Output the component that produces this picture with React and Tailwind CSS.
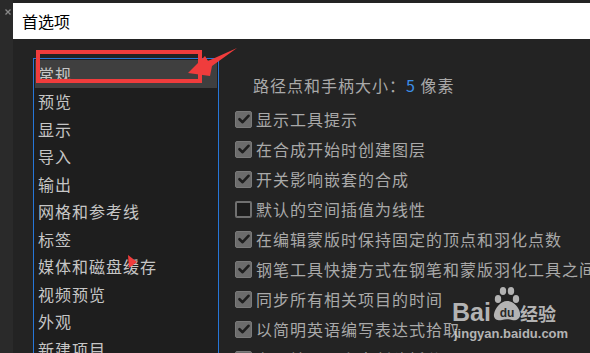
import React from "react";

const leftItems = ["常规","预览","显示","导入","输出","网格和参考线","标签","媒体和磁盘缓存","视频预览","外观","新建项目","自动保存"];
const rows = [
  ["显示工具提示", true],
  ["在合成开始时创建图层", true],
  ["开关影响嵌套的合成", true],
  ["默认的空间插值为线性", false],
  ["在编辑蒙版时保持固定的顶点和羽化点数", true],
  ["钢笔工具快捷方式在钢笔和蒙版羽化工具之间切换", true],
  ["同步所有相关项目的时间", true],
  ["以简明英语编写表达式拾取", true],
  ["在原始图层上方创建拆分图层", true],
];

function Box({ checked }) {
  if (!checked)
    return <div className="w-[17px] h-[17px] shrink-0 rounded-[2px] border-2 border-[#707070] bg-[#1c1c1c]" />;
  return (
    <div className="w-[17px] h-[17px] shrink-0 rounded-[2px] bg-[#6c6c6c] border border-[#7a7a7a] flex items-center justify-center">
      <svg width="12" height="10" viewBox="0 0 12 10">
        <path d="M1.5 5.2 L4.6 8.2 L10.5 1.8" fill="none" stroke="#1e1e1e" strokeWidth="2.6" strokeLinecap="round" strokeLinejoin="round" />
      </svg>
    </div>
  );
}

export default function App() {
  const cjk = { fontFamily: '"Noto Sans CJK SC", "Noto Sans", sans-serif' };
  return (
    <div className="relative w-[590px] h-[353px] overflow-hidden bg-[#232323] flex" style={cjk}>
      <div className="w-[13px] shrink-0 bg-[#2a2a2a] relative">
        <svg className="absolute left-[5px] top-[9px]" width="6" height="6" viewBox="0 0 6 6">
          <path d="M0.5 0.5 L5.5 5.5 M5.5 0.5 L0.5 5.5" stroke="#8a8a8a" strokeWidth="1.3" />
        </svg>
      </div>
      <div className="flex-1 flex flex-col min-h-0">
        <div className="mt-[3px] h-[36px] shrink-0 bg-white flex items-center pl-[9px] text-[16px] text-black">首选项</div>
        <div className="flex items-start">
          <div className="ml-[20px] mt-[19px] w-[186px] h-[330px] shrink-0 border border-[#2676d8] bg-[#1e1e1e] p-[1px] text-[16px] tracking-[1px] text-[#c6c6c6] overflow-hidden">
            {leftItems.map((t, i) => (
              <div key={t} className={"h-[27.5px] flex items-center pl-[3px] whitespace-nowrap " + (i === 0 ? "bg-[#3f3f3f]" : "")}>{t}</div>
            ))}
          </div>
          <div className="flex-1 pl-[16px] pt-[36px] text-[16px] tracking-[1px] text-[#a9a9a9] whitespace-nowrap overflow-hidden">
            <div className="h-[20px] leading-[20px] pl-[18px]">
              路径点和手柄大小：<span className="text-[#3c8fe8]">5</span> 像素
            </div>
            <div className="mt-[9px]">
              {rows.map(([t, c]) => (
                <div key={t} className="h-[30px] flex items-center gap-[4px]">
                  <Box checked={c} />
                  <span>{t}</span>
                </div>
              ))}
            </div>
          </div>
        </div>
      </div>

      {/* annotations */}
      <div className="absolute left-[36px] top-[50px] w-[166px] h-[33px] border-[4px] border-[#f03c3c]" />
      <svg className="absolute left-0 top-0" width="590" height="353" viewBox="0 0 590 353">
        <polygon points="188,73 205,56 208,61 237,48 212,66 210,76" fill="#f03c3c" />
        <polygon points="128,255 137,262 129,268" fill="#f03c3c" />
      </svg>

      {/* watermark */}
      <div className="absolute left-[452px] top-[286px] w-[110px] h-[60px] text-[#d8d8d8] opacity-80 pointer-events-none">
        <svg className="absolute left-[38px] top-0" width="32" height="36" viewBox="0 0 32 36">
          <ellipse cx="8" cy="13" rx="3.2" ry="4" fill="#d8d8d8" />
          <ellipse cx="13" cy="5" rx="3.2" ry="4" fill="#d8d8d8" />
          <ellipse cx="21" cy="5" rx="3.2" ry="4" fill="#d8d8d8" />
          <ellipse cx="26" cy="13" rx="3.2" ry="4" fill="#d8d8d8" />
          <path d="M17 15 C11 15 5 22 4 28 C3 34 9 35 12 34 C15 33 19 33 22 34 C26 35 31 33 30 27 C29 21 23 15 17 15 Z" fill="#d8d8d8" />
          <text x="17" y="31" textAnchor="middle" fontSize="12" fontWeight="700" fill="#2a2a2a" fontFamily="Liberation Sans, sans-serif">du</text>
        </svg>
        <div className="absolute left-0 top-[13px] text-[25px] leading-[26px] font-bold" style={{ fontFamily: '"Liberation Sans", Arial, sans-serif' }}>Bai</div>
        <div className="absolute left-[68px] top-[16px] text-[18px] leading-[22px] font-bold">经验</div>
        <div className="absolute left-[2px] top-[40px] text-[13px] leading-[16px] font-bold" style={{ fontFamily: '"Liberation Sans", Arial, sans-serif' }}>jingyan.baidu.com</div>
      </div>
    </div>
  );
}
